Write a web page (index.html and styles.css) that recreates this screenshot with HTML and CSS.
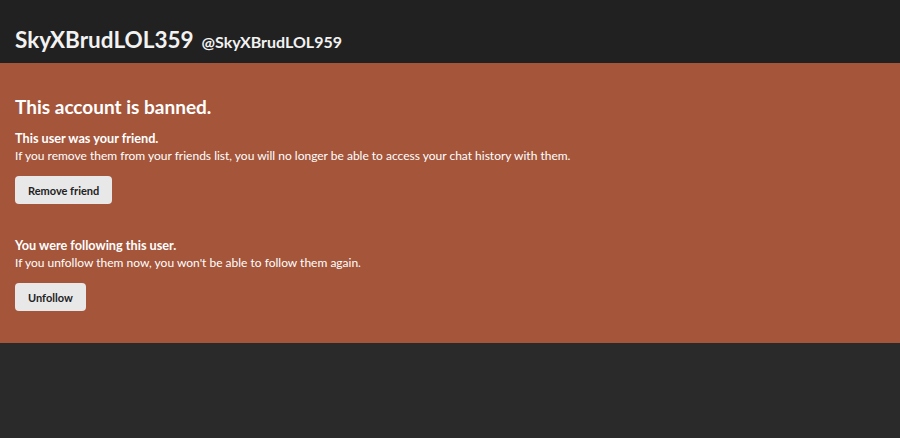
FILE: index.html
```html
<!DOCTYPE html>
<html>
<head>
<meta charset="utf-8">
<link rel="stylesheet" href="styles.css">
</head>
<body>
<header class="profile-header">
  <h1 class="display-name">SkyXBrudLOL359</h1>
  <span class="username">@SkyXBrudLOL959</span>
</header>
<section class="banned">
  <h2 class="banned-title">This account is banned.</h2>
  <div class="block">
    <p class="block-title">This user was your friend.</p>
    <p class="block-text">If you remove them from your friends list, you will no longer be able to access your chat history with them.</p>
    <button class="btn">Remove friend</button>
  </div>
  <div class="block block-second">
    <p class="block-title">You were following this user.</p>
    <p class="block-text">If you unfollow them now, you won't be able to follow them again.</p>
    <button class="btn">Unfollow</button>
  </div>
</section>
</body>
</html>
```
FILE: styles.css
```css
* { box-sizing: border-box; }
html, body { margin: 0; padding: 0; }
body {
  background: #2a2a2a;
  font-family: Lato, "Noto Sans", sans-serif;
  color: #fff;
  width: 900px;
  height: 438px;
  overflow: hidden;
}
.profile-header {
  background: #212121;
  height: 63px;
  display: flex;
  align-items: baseline;
  padding: 26px 15px 0;
  gap: 8px;
}
.display-name {
  margin: 0;
  font-size: 22.5px;
  font-weight: 700;
  color: #f2f2f2;
  line-height: 28px;
}
.username {
  font-size: 16px;
  font-weight: 700;
  color: #f2f2f2;
}
.banned {
  background: #a5553a;
  height: 280px;
  padding: 32px 15px 0;
}
.banned-title {
  margin: 0 0 11px;
  font-size: 19px;
  font-weight: 700;
  line-height: 24px;
}
.block-title {
  margin: 0;
  font-size: 12.7px;
  font-weight: 700;
  line-height: 17px;
}
.block-text {
  margin: 0 0 12px;
  font-size: 12px;
  line-height: 17px;
}
.btn {
  display: block;
  background: #e8e8e8;
  border: none;
  border-radius: 4px;
  height: 28px;
  padding: 0 13px;
  font-family: Lato, "Noto Sans", sans-serif;
  font-size: 11px;
  font-weight: 700;
  color: #222;
}
.block-second { margin-top: 33px; }
```
